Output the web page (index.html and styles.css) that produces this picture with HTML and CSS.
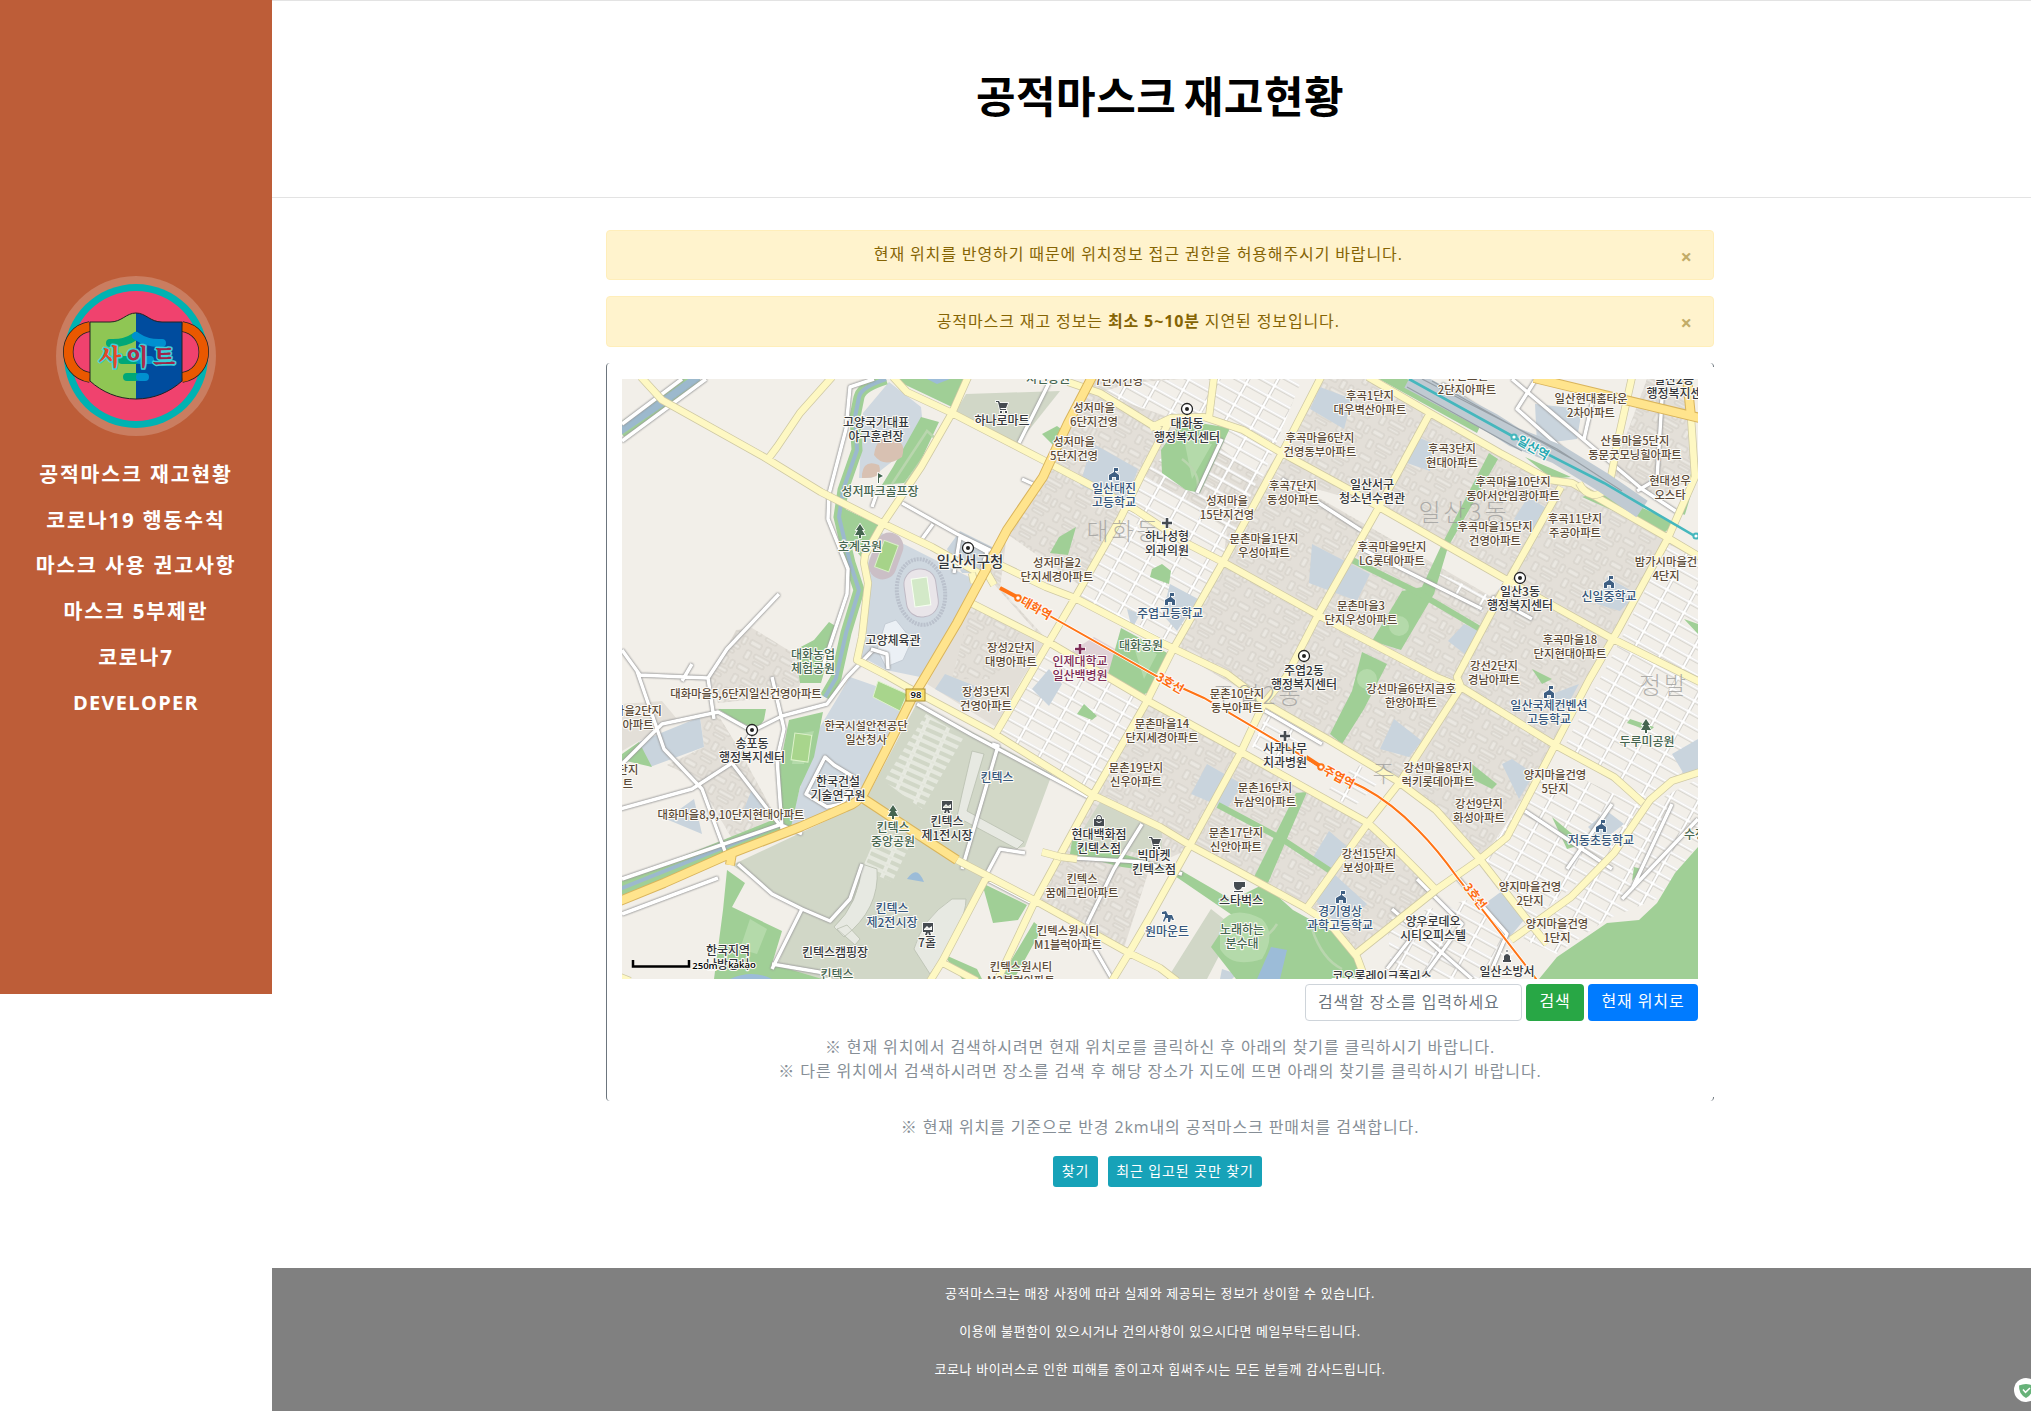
FILE: index.html
```html
<!DOCTYPE html>
<html lang="ko">
<head>
<meta charset="utf-8">
<title>공적마스크 재고현황</title>
<link rel="stylesheet" href="styles.css">
</head>
<body>
<div class="page">
<nav class="sidebar">
  <svg class="logo" viewBox="0 0 160 160" width="160" height="160">
    <circle cx="80" cy="80" r="80" fill="#ca7d60"/>
    <circle cx="80" cy="80" r="72" fill="#00b2b2"/>
    <circle cx="80" cy="80" r="65" fill="#f0426e"/>
    <g fill="none">
      <path d="M34 50.500C5 55 5 97 34 101.500M126 50.500c29 4.500 29 46.500 0 51" stroke="#222" stroke-width="10.500"/>
      <path d="M34 50.500C5 55 5 97 34 101.500M126 50.500c29 4.500 29 46.500 0 51" stroke="#ea5800" stroke-width="9"/>
    </g>
    <path d="M34 46H54C66 46 70 37 80 37V123C62 123 46 116 34 105Z" fill="#8fc654"/>
    <path d="M126 46H106C94 46 90 37 80 37V123C98 123 114 116 126 105Z" fill="#004c9e"/>
    <path d="M34 46H54C66 46 70 37 80 37S94 46 106 46H126V105C114 116 98 123 80 123S46 116 34 105Z" fill="none" stroke="#222" stroke-width="1"/>
    <path d="M54 67Q68 68 80 60M66 84H80M71 101H80" stroke="#00a878" stroke-width="8" stroke-linecap="round" fill="none"/>
    <path d="M106 67Q92 68 80 60V60M94 84H84M89 101H84" stroke="#0090d0" stroke-width="8" stroke-linecap="round" fill="none"/>
    <g class="logo-text"><text x="54" y="89" fill="#e24a26">사</text><text x="81" y="89" fill="#b02a48">이</text><text x="108" y="89" fill="#9c2448">트</text></g>
  </svg>
  <ul class="menu">
    <li>공적마스크 재고현황</li>
    <li>코로나19 행동수칙</li>
    <li>마스크 사용 권고사항</li>
    <li>마스크 5부제란</li>
    <li>코로나7</li>
    <li class="latin">DEVELOPER</li>
  </ul>
</nav>
<div class="main">
  <header class="head"><h1>공적마스크 재고현황</h1></header>
  <div class="container">
    <div class="alert"><p>현재 위치를 반영하기 때문에 위치정보 접근 권한을 허용해주시기 바랍니다.</p><span class="close">×</span></div>
    <div class="alert second"><p>공적마스크 재고 정보는 <b>최소 5~10분</b> 지연된 정보입니다.</p><span class="close">×</span></div>
    <section class="card">
      <svg class="map" viewBox="0 0 1076 600" width="1076" height="600">
        <defs>
          <pattern id="bld" width="34" height="27" patternUnits="userSpaceOnUse" patternTransform="rotate(29)">
            <path d="M2 3h12v5H2zM19 2h5v9h-5zM28 3h4v8h-4zM3 14h5v9H3zM12 14h17v4H12zM14 21h12v3H14z" fill="#eae7e1" stroke="#d0ccc4" stroke-width=".9"/>
          </pattern>
          <pattern id="grid" width="26" height="12" patternUnits="userSpaceOnUse" patternTransform="rotate(29)">
            <path d="M0 1.5h26M2 0v12" stroke="#c0bdb6" stroke-width="3.800"/>
            <path d="M0 1.5h26M2 0v12" stroke="#fff" stroke-width="2.600"/>
          </pattern>
          <pattern id="lots" width="22" height="8" patternUnits="userSpaceOnUse" patternTransform="rotate(24)">
            <path d="M1 1h20v6H1z" fill="none" stroke="#eceee6" stroke-width="1.6"/>
          </pattern>
        </defs>
        <path d="M0 0H1076V600H0Z" fill="#f2efe9"/>

        <g fill="#e3dfd8">
          <path d="M446 44L421 98L362 194L428 268L374 354L471 416L412 524L375 600H492L540 500L682 528L735 578L814 511L903 545L949 518L1021 424L1076 300V176L1046 159L808 34L746 0H469Z"/>
          <path d="M114 251L130 249L171 274L180 300L174 316L96 324L88 300Z"/>
          <path d="M78 336L96 336L114 365L155 440L115 468L75 400L45 386L82 368Z"/>
          <path d="M0 325L40 322L55 340L0 372ZM349 226L424 262L400 300L374 348L305 305ZM1025 0H1065L1073 98L1035 120L990 95Z"/>
        </g>
        <path fill="url(#bld)" d="M446 44L421 98L362 194L428 268L374 354L471 416L412 524L375 600H492L540 500L682 528L735 578L814 511L903 545L949 518L1021 424L1076 300V176L1046 159L808 34L746 0H469ZM114 251L130 249L171 274L180 300L174 316L96 324L88 300ZM78 336L96 336L114 365L155 440L115 468L75 400L45 386L82 368ZM349 226L400 250L374 300L330 300ZM1025 0H1065L1073 98L1035 120L990 95Z"/>

        <g fill="#f2efe9">
          <path d="M507 4L560 0H699L640 100L587 60L549 39L478 14ZM520 95L605 150L601 183L549 274L453 219L499 138Z"/>
          <path d="M428 268L524 324L471 416L374 354ZM1046 165L1076 180V420L1021 428L985 540L900 545L862 478L933 370Z"/>
          <path d="M385 155L378 209L428 264L524 320L619 373L746 444L814 511L903 545L814 431L646 326L538 263Z"/>
          <path d="M735 578L814 511L860 500L935 578V600H742ZM814 0H1010L995 61L985 100L900 50ZM660 100L757 128L885 201L870 218L650 92ZM404 470L440 478L412 524L364 496ZM412 524L507 574L492 600H375ZM528 488L567 470L682 530L735 578L600 570L560 600H492Z"/>
        </g>
        <path fill="url(#grid)" d="M507 4L560 0H680L640 100L587 60L549 39L478 14ZM575 50L640 90L601 183L499 138L520 95ZM499 141L600 185L549 274L453 219ZM428 270L524 324L471 416L374 354ZM1046 165L1076 180V390L1021 420L940 372L1000 258ZM928 385L1021 428L985 480L905 545L862 478ZM1028 425L1076 400V465L1035 520L985 540L935 575L900 560L949 520L992 474ZM740 160L870 218L860 234L730 150ZM645 335L690 360L665 385L630 368ZM735 385L760 400L730 430L705 412ZM765 540L850 520L880 560L860 600H770Z"/>

        <g fill="#d1d7c7">
          <path d="M295 324L430 395L403 468L378 472L364 496L310 600H150L178 530L110 486L242 424Z"/>
          <path d="M344 15L438 12L395 66L334 32Z"/><path d="M480 420L540 450V480L455 460ZM589 530L612 548L585 600H545Z"/>
        </g>
        <path fill="url(#lots)" d="M304 335L342 358L300 430L262 402ZM255 455L290 462L270 503L240 490Z"/>
        <g fill="#e7e9e2" stroke="#b9bfb0" stroke-width=".8">
          <path d="M350 372L362 375L345 432L402 463L395 470L335 438L340 415ZM240 485L255 490Q258 530 222 558L212 548Q237 525 240 485ZM330 520L344 520Q344 545 308 595L292 570Q300 540 330 520ZM225 546L238 560L233 566L215 550Z"/>
        </g>

        <g fill="#c9d4dd">
          <path d="M267 3L299 28L300 38L285 71L249 99L237 99L241 34ZM258 153L353 201L303 299L264 291L240 278L246 184ZM228 298L285 318L242 414L178 448L167 449L192 358Z" fill="#cfd8e0"/>
          <path d="M17 363L78 338L82 368L28 388ZM325 170L338 152L374 170L360 194L340 194ZM470 64L516 90L502 128L458 106ZM688 30L698 8L730 20L722 50ZM785 84L796 58L812 65L808 92ZM548 205L576 220L555 252L540 235ZM690 165L748 195L735 222L687 204ZM892 140L906 118L926 130L912 154ZM985 198L1015 215L998 232L975 225ZM826 262L842 245L857 252L844 276ZM323 295L358 309L346 328L313 310ZM913 25L960 30L955 60L915 65ZM569 415L585 385L620 405L605 430ZM758 370L772 340L800 362L787 378ZM880 385L890 380L912 395L897 420ZM690 480L707 452L728 470L715 495ZM692 520L712 495L745 525L720 550ZM861 526L880 512L902 541L887 559ZM930 315L957 305L942 332L915 325ZM966 448L985 432L1002 445L980 462ZM1050 375L1076 360V396L1063 397ZM410 310L427 290L440 305L427 327ZM505 230L518 235L510 250Z"/>
          <path d="M44 440L72 420L80 455ZM120 435L130 410L155 440ZM600 590L615 595L610 600H598Z"/>
        </g>
        <path d="M450 272L472 258L502 275L490 300L462 298Z" fill="#e0d2d6"/>

        <g fill="#a0cf96">
          <path d="M271 0L330 28L344 0ZM299 38L317 43L299 81L282 104L260 106L271 88ZM221 129L257 146L239 178L224 158ZM207 243L215 248L199 304L178 304L173 271L192 261Z"/>
          <path d="M96 330L144 330L142 341L135 351L114 341ZM17 363L30 388L0 381V375ZM167 341L201 333L192 378L178 408L169 448L158 444L157 391Z"/>
          <path d="M105 491L123 504L110 528L160 552L150 585L200 600H92L101 531ZM360 504L405 526L396 541L371 544ZM412 543L420 550L392 600H378ZM321 575L355 590L360 600H340Z"/>
          <path d="M450 461L522 481L560 492L610 521L642 505L671 531L689 541L717 554L735 581L739 600H614L589 568L610 536L550 495L500 488L448 475ZM1076 468L1053 494L1035 524L1017 541L985 544L935 578L917 600H1076Z"/>
          <path d="M757 0H785L864 34L855 54ZM903 78L949 98L930 100ZM982 111L1053 144L1042 154L960 118ZM560 41L608 49L578 114L564 111L540 94L539 71ZM530 190L540 185L549 192L547 205L528 198ZM499 249L549 276L535 310L515 318L485 299Z"/>
          <path d="M867 74L876 80L826 168L812 215L779 271L750 262L780 212L800 208L820 165ZM740 273L765 285L742 330L720 365L708 355L730 312ZM685 413L674 414L632 498L646 504ZM437 158L454 148L446 176L428 174ZM420 55L435 47L446 55L435 70ZM455 335L462 325L475 337L470 341ZM850 385L875 405L870 410L850 400ZM930 438L962 465L945 470ZM1008 340L1032 348L1028 352L1005 344ZM1012 488L1020 490L1010 502ZM910 290L930 300L920 305ZM1062 240L1076 245V255Z"/>
        </g>
        <path d="M728 180L795 213L858 250M596 426L660 460L710 493M1075 85L1060 135" fill="none" stroke="#a0cf96" stroke-width="6"/>
        <g fill="#b4daaa"><circle cx="777" cy="247" r="10"/><circle cx="745" cy="300" r="10"/><path d="M598 545Q610 525 640 540Q655 555 640 580Q610 590 598 570ZM175 355L192 352L182 385L170 385ZM562 60L590 65L570 100ZM510 262L535 275L522 300ZM128 540L145 550L135 575L118 570Z"/></g>
        <path d="M649 568L665 571L658 600H635ZM305 0H328L315 5ZM285 500Q295 485 302 503ZM108 600Q130 590 150 600Z" fill="#9cbcd8"/>

        <path d="M252 76Q255 55 270 60Q285 62 280 78Q262 90 252 76ZM240 95Q242 80 257 86Q262 100 240 99Z" fill="#d8c1b2"/>
        <g transform="rotate(20 264 177)"><rect x="250" y="153" width="28" height="48" rx="14" fill="#cbbfc6"/><rect x="257" y="163" width="15" height="28" fill="#a6d389" stroke="#d9f0c8"/></g>
        <g transform="rotate(-8 299 213)"><ellipse cx="299" cy="213" rx="24" ry="33" fill="none" stroke="#bac1cc" stroke-width="4" stroke-dasharray="2 1"/><rect x="283" y="190" width="32" height="48" rx="15" fill="#e9e5e9" stroke="#bfb9c4"/><rect x="291" y="199" width="16" height="28" fill="#d3e9c8" stroke="#f6fff0"/></g>
        <path d="M274 241L290 261L281 281L264 288L255 271L263 245Z" fill="#ebf0f5" stroke="#c5cdd6"/>
        <path d="M256 302L285 315L278 332L251 318Z" fill="#a8d58c" stroke="#def2cb"/>
        <rect x="171" y="355" width="17" height="27" fill="#a8d58c" stroke="#def2cb" transform="rotate(8 179 368)"/>

        <g fill="none" stroke="#b9d6ae" stroke-width="2.500"><path d="M270 105L305 52L314 60L283 105M560 80Q580 95 575 112M655 545Q640 570 600 565M690 550Q700 580 720 590"/></g>

        <g fill="none">
          <path d="M264 0Q239 8 237 18L233 38L235 71L221 111L217 138L228 184L237 211L224 254L214 299L203 318" stroke="#a0cf96" stroke-width="11"/>
          <path d="M264 0Q239 8 237 18L233 38L235 71L221 111L217 138L228 184L237 211L224 254L214 299L203 318" stroke="#9cb9cd" stroke-width="4"/>
          <path d="M76 -2L42 22L-2 52M157 446L85 475L-2 510" stroke="#a0cf96" stroke-width="14"/>
          <path d="M76 -2L42 22L-2 52" stroke="#9cb9cd" stroke-width="8"/><path d="M157 446L85 475L-2 510" stroke="#9cb9cd" stroke-width="4"/>
        </g>

        <g class="minor" fill="none">
            <path d="M60 0L0 45M84 0L0 62M252 0L228 8L224 50L207 115L206 140L226 190L225 215L200 290M0 271L18 296L86 299L105 270L157 215M86 299L92 340M60 302L70 285M-5 390L40 345L96 333L130 352L160 337L205 325L225 298L252 270M-2 430L70 410L110 384L130 353M15 292L42 370L80 410L104 475M110 384L157 445L180 455M160 445L0 500M96 499L0 535M116 485L150 515L180 530L150 590M150 585L220 597M150 298L162 350L155 380L160 450M180 530L208 542L228 520L240 485"/>
            <path d="M280 124L335 155L374 174M311 145L300 160M256 111L250 128M332 194L338 158L365 173L360 190M428 2L397 64M400 100L413 106M295 325L350 356L470 420M370 365L376 367L340 490M403 474L378 470L362 500M364 500L412 525M453 479L520 483L560 495M520 445L492 490L465 545M460 548L490 600M203 378L184 415L205 428L220 425L235 400L212 386ZM249 270L265 275L266 290"/>
            <path d="M660 100L740 152M740 170L860 230M870 218L910 240M890 0L1020 110L1058 135M914 0L895 30L985 110M1040 20L1035 100L1015 112M962 60L970 25M820 5L895 55M575 114L600 60M795 500L840 545L800 600M770 530L850 600M800 545L765 590M835 498L885 555L870 590M640 330L700 365M900 430L990 490M990 425L945 490M1050 425L1010 510M1076 440L1000 520"/>
        </g>
        <g id="majors"></g>
        <g fill="none">
          <path d="M787 0L870 44L892 58L935 75L982 104L1020 130" stroke="#c0cad2" stroke-width="20"/>
          <path d="M800 0L935 70L1000 112M785 8L900 72M810 2L950 80" stroke="#969fa6" stroke-width="1.2"/>
          <path d="M787 0L892 58L982 104L1076 159" stroke="#45b7bd" stroke-width="2.600"/>
          <circle cx="892" cy="58" r="2.600" fill="#fff" stroke="#45b7bd" stroke-width="2"/><circle cx="1074" cy="157" r="2.600" fill="#fff" stroke="#45b7bd" stroke-width="2"/>
          <path d="M378 209L396 219L538 299L582 319L699 388L742 409Q770 424 796 451Q815 470 835 498L918 605" stroke="#fff" stroke-width="3.5"/>
          <path d="M378 209L396 219L538 299L582 319L699 388L742 409Q770 424 796 451Q815 470 835 498L918 605" stroke="#ff7416" stroke-width="2"/>
          <path d="M378 209L395 218M684 378L698 387" stroke="#ff7416" stroke-width="4"/>
          <circle cx="396" cy="219" r="2.800" fill="#fff" stroke="#ff7416" stroke-width="2"/><circle cx="699" cy="388" r="2.800" fill="#fff" stroke="#ff7416" stroke-width="2"/>
        </g>
        <rect x="284" y="310" width="19" height="12" fill="#f8dc6a" stroke="#a98d2f"/>
        <g id="labels"></g>
        <path d="M11 581V587.500H67V581" fill="none" stroke="#000" stroke-width="2.500"/>
      </svg>
      <div class="search">
        <span class="input">검색할 장소를 입력하세요</span><span class="btn green">검색</span><span class="btn blue">현재 위치로</span>
      </div>
      <p class="note">※ 현재 위치에서 검색하시려면 현재 위치로를 클릭하신 후 아래의 찾기를 클릭하시기 바랍니다.</p>
      <p class="note">※ 다른 위치에서 검색하시려면 장소를 검색 후 해당 장소가 지도에 뜨면 아래의 찾기를 클릭하시기 바랍니다.</p>
    </section>
    <p class="note range">※ 현재 위치를 기준으로 반경 2km내의 공적마스크 판매처를 검색합니다.</p>
    <div class="find"><span class="btn sm">찾기</span><span class="btn sm wide">최근 입고된 곳만 찾기</span></div>
  </div>
  <footer class="foot">
    <p>공적마스크는 매장 사정에 따라 실제와 제공되는 정보가 상이할 수 있습니다.</p>
    <p>이용에 불편함이 있으시거나 건의사항이 있으시다면 메일부탁드립니다.</p>
    <p>코로나 바이러스로 인한 피해를 줄이고자 힘써주시는 모든 분들께 감사드립니다.</p>
  </footer>
</div>
</div>
<svg class="guard" viewBox="0 0 24 24" width="24" height="24"><circle cx="12" cy="12" r="12" fill="#fff"/><path d="M5 7.500Q12 4.500 19 7.500Q19.500 16 12 20Q4.500 16 5 7.500Z" fill="#67b279"/><path d="M9 11.500l2.500 2.800L16 10" fill="none" stroke="#fff" stroke-width="1.500"/></svg>
<script src="map.js"></script>
</body>
</html>
```
FILE: styles.css
```css
* { box-sizing: border-box; }
html, body { margin: 0; height: 1411px; overflow: hidden; }
body { font-family: "Open Sans", "Noto Sans CJK KR", sans-serif; font-size: 16px; line-height: 24px; letter-spacing: .88px; color: #868e96; background: #fff; }
p, h1, ul { margin: 0; padding: 0; }
.page { display: flex; align-items: flex-start; width: 2048px; }
.sidebar { width: 272px; height: 994px; flex: none; background: #bd5d38; display: flex; flex-direction: column; align-items: center; padding-top: 276px; }
.logo { display: block; }
.logo-text { font: 900 23px "Noto Serif CJK KR", "Noto Sans CJK KR", sans-serif; letter-spacing: 0; text-anchor: middle; stroke: #3cd0d8; stroke-width: 3px; paint-order: stroke; }
.menu { list-style: none; margin-top: 16px; text-align: center; color: #fff; font-weight: 700; font-size: 20.5px; letter-spacing: 1.85px; white-space: nowrap; }
.menu li { height: 45.7px; line-height: 45.7px; }
.menu .latin { font-size: 20px; letter-spacing: 1.3px; }
.main { width: 1776px; height: 1411px; flex: none; display: flex; flex-direction: column; border-top: 1px solid #e3e3e3; }
.head { height: 197px; border-bottom: 1px solid #e3e3e3; text-align: center; padding-top: 61px; }
h1 { font: 700 43px/64px "Noto Sans CJK KR", sans-serif; letter-spacing: .5px; word-spacing: -5px; color: #000; white-space: nowrap; }
.container { width: 1108px; margin: 0 auto; padding-top: 32px; flex: 1; white-space: nowrap; }
.alert { height: 50px; margin-bottom: 16px; border: 1px solid #ffeeba; border-radius: 4px; background: #fff3cd; color: #856404; display: flex; align-items: center; padding-right: 21px; }
.alert.second { height: 51px; }
.alert p { flex: 1; text-align: center; padding-right: 11px; padding-bottom: 2px; }
.alert b { font-weight: 700; }
.close { font: 700 20px/20px "Open Sans", sans-serif; letter-spacing: 0; color: #c2ac68; padding-top: 3px; }
.card { position: relative; height: 738px; border-left: 1px solid #6c757d; border-radius: 4px; padding: 16px 16px 0 15px; }
.card::before, .card::after { content: ""; position: absolute; right: 0; width: 4px; height: 4px; border-right: 1px solid #6c757d; }
.card::before { top: 0; border-radius: 0 4px 0 0; }
.card::after { bottom: 0; border-radius: 0 0 4px 0; }
.map { display: block; }
.search { display: flex; justify-content: flex-end; gap: 4px; height: 37px; margin-top: 5px; margin-bottom: 14px; }
.input { width: 217px; border: 1px solid #ced4da; border-radius: 4px; padding-left: 12px; line-height: 34px; color: #6c757d; }
.btn { border-radius: 4px; color: #fff; text-align: center; line-height: 35px; }
.green { width: 58px; background: #28a745; }
.blue { width: 110px; background: #007bff; }
.note { text-align: center; }
.range { margin-top: 14px; }
.find { display: flex; justify-content: center; gap: 10px; margin-top: 17px; padding-right: 5px; }
.sm { width: 45px; height: 31px; line-height: 29px; font-size: 14px; background: #17a2b8; border-radius: 3px; }
.wide { width: 154px; }
.foot { height: 143px; background: #808080; color: #fff; text-align: center; font-size: 13px; letter-spacing: .62px; padding-top: 6px; }
.foot p { height: 38px; line-height: 38px; }
.guard { position: absolute; left: 2014px; top: 1378px; }

.minor path { stroke: #fff; stroke-width: 3.5px; stroke-linejoin: round; filter: drop-shadow(0 0 1px #999) drop-shadow(0 0 .4px #999); }
.road path { fill: none; stroke: #cfc9a4; stroke-width: 8px; stroke-linejoin: round; }
.road .in { stroke: #fef8c3; stroke-width: 6.5px; }
.road.big path { stroke: #d9b45c; stroke-width: 10px; }
.road.big .in { stroke: #ffe48d; stroke-width: 8px; }
.lb { font: 500 11.3px "Noto Sans CJK KR", sans-serif; letter-spacing: 0; text-anchor: middle; fill: #5b4a38; stroke: #fbfaf6; stroke-width: 2.2px; paint-order: stroke; stroke-linejoin: round; }
.lb.k { fill: #33363b; font-size: 12px; }
.lb.g { fill: #456550; font-size: 12px; }
.lb.b { fill: #35567c; font-size: 12px; }
.lb.m { fill: #7d2b55; font-size: 12px; }
.lb.L { fill: #33363b; font-size: 14.5px; }
.lb.d { fill: #9a9a98; fill-opacity: .75; stroke: none; font-size: 24px; font-weight: 300; letter-spacing: 3px; }
.lb.o { fill: #ff6a10; font-size: 12px; font-weight: 700; }
.lb.t { fill: #28a9b4; font-size: 12.5px; font-weight: 700; }
.lb.s { fill: #000; font: 600 9.5px "Open Sans", sans-serif; }
.ic { fill: #454b50; stroke: #fff; stroke-width: 1.5px; paint-order: stroke; }
.ic.b { fill: #3e5f83; }
.ic.g { fill: #456550; }
.ic.m { fill: #7d2b55; }
```
FILE: map.js
```js
const NS = "http://www.w3.org/2000/svg";
const make = (tag, attrs, parent) => {
  const el = document.createElementNS(NS, tag);
  for (const k in attrs) el.setAttribute(k, attrs[k]);
  parent.appendChild(el);
  return el;
};

// Arterial roads: a casing below, a fill above.
const yellow = "M19 -2L40 21L142 78L199 113L260 144L310 168L362 197M374 184L424 208L453 219L538 263L605 295L646 326L707 361L774 401L814 431L857 479L903 538L925 565M210 -2L178 34L155 68L146 80M271 -2L285 13L330 34L421 81L478 111L514 131L564 164L601 183L696 236L757 268L814 298L839 308L933 366L992 398L1021 424M346 -2L330 34L299 88L260 146L243 176L242 184L246 204L240 258L235 281L264 296L285 308L371 354L471 416L538 448L571 468L614 491L682 528L707 544L735 578L744 602M446 3L478 14L538 51M592 -2L587 38M699 -2L660 74L601 183L549 274L524 324L471 416L412 524L375 602M528 49L549 39L582 38L621 51L660 74L728 111L757 128L885 201L989 259L1078 303M549 39L520 95L499 138L453 219L424 268L374 354M808 34L757 128L696 236L664 298L642 324L619 373L567 468L528 538L507 574L490 602M746 -2L808 34L878 74L928 101L950 104L1046 159L1078 178M939 108L885 204L835 298L839 308L778 403L746 444L685 529M1069 38L1073 98L1046 159L996 251L967 301L933 366L885 458L857 481L814 511L735 574M1078 393L1050 402L1028 421L992 474L949 518L889 561M349 224L428 264L528 323L619 373L746 444Q780 475 814 511M335 481L412 521L507 574L538 589L555 602M364 499L321 581L308 602M321 584L355 602M-2 598L8 602";
const amber = "M470 -2L446 44L421 98L385 151L362 194L335 244L303 298L289 321L264 371L242 414Q236 424 224 428L178 448L110 474L42 504L-2 522M912 -1L1078 39M1065 -2L1069 38M242 420L289 451L335 481M110 474L108 486";
const ramp = "M1010 -2L996 61L989 98Q985 116 971 116Q962 114 957 104M350 194L352 204M365 194L372 206M439 478L420 473M439 478L455 480";
const majors = document.getElementById("majors");
for (const [cls, d] of [["road", yellow], ["road", ramp], ["road big", amber]]) {
  const g = make("g", { class: cls }, majors);
  make("path", { d }, g);
  make("path", { d, class: "in" }, g);
}

// kind, x, y of the first line's middle, lines, rotation
const labels = [
  ["d", 502, 152, "대화동"], ["d", 842, 133, "일산3동"], ["d", 636, 316, "주엽2동"], ["d", 1042, 306, "정발"], ["d", 763, 394, "주"],
  ["k", 254, 44, "고양국가대표|야구훈련장"], ["g", 258, 113, "성저파크골프장"], ["k", 380, 42, "하나로마트"],
  ["", 472, 29, "성저마을|6단지건영"], ["", 452, 63, "성저마을|5단지건영"], ["g", 426, 0, "시민공원"], ["", 497, 2, "7단지건영"],
  ["b", 492, 110, "일산대진|고등학교"], ["g", 238, 168, "호계공원"], ["L", 348, 183, "일산서구청"],
  ["", 435, 184, "성저마을2|단지세경아파트"], ["o", 414, 229, "대화역", 30], ["k", 271, 262, "고양체육관"],
  ["g", 191, 276, "대화농업|체험공원"], ["", 389, 269, "장성2단지|대명아파트"], ["m", 458, 283, "인제대학교|일산백병원"],
  ["g", 519, 267, "대화공원"], ["b", 548, 235, "주엽고등학교"], ["k", 545, 158, "하나성형|외과의원"],
  ["k", 565, 45, "대화동|행정복지센터"], ["", 748, 17, "후곡1단지|대우벽산아파트"], ["", 698, 59, "후곡마을6단지|건영동부아파트"],
  ["", 671, 107, "후곡7단지|동성아파트"], ["", 830, 70, "후곡3단지|현대아파트"], ["k", 750, 106, "일산서구|청소년수련관"],
  ["", 891, 103, "후곡마을10단지|동아서안임광아파트"], ["", 605, 122, "성저마을|15단지건영"], ["", 642, 160, "문촌마을1단지|우성아파트"],
  ["", 770, 168, "후곡마을9단지|LG롯데아파트"], ["", 873, 148, "후곡마을15단지|건영아파트"], ["", 953, 140, "후곡11단지|주공아파트"],
  ["k", 898, 213, "일산3동|행정복지센터"], ["b", 987, 218, "신일중학교"], ["", 1044, 183, "밤가시마을건|4단지"],
  ["", 739, 227, "문촌마을3|단지우성아파트"], ["k", 682, 292, "주엽2동|행정복지센터"], ["", 872, 287, "강선2단지|경남아파트"],
  ["", 948, 261, "후곡마을18|단지현대아파트"], ["", 845, -3, "유진스웰|2단지아파트"], ["", 969, 20, "일산현대홈타운|2차아파트"],
  ["", 1013, 62, "산들마을5단지|동문굿모닝힐아파트"], ["k", 1052, 1, "일산2동|행정복지센"], ["", 1048, 102, "현대성우|오스타"],
  ["t", 911, 69, "일산역", 30],
  ["", 124, 315, "대화마을5,6단지일신건영아파트"], ["", 16, 332, "마을2단지|아파트"], ["k", 130, 365, "송포동|행정복지센터"],
  ["", 244, 347, "한국시설안전공단|일산청사"], ["k", 216, 403, "한국건설|기술연구원"], ["", 109, 436, "대화마을8,9,10단지현대아파트"],
  ["s", 294, 316, "98"], ["", 364, 313, "장성3단지|건영아파트"], ["b", 375, 399, "킨텍스"], ["", 540, 345, "문촌마을14|단지세경아파트"],
  ["", 514, 389, "문촌19단지|신우아파트"], ["g", 271, 449, "킨텍스|중앙공원"], ["k", 325, 443, "킨텍스|제1전시장"],
  ["k", 477, 456, "현대백화점|킨텍스점"], ["k", 532, 477, "빅마켓|킨텍스점"], ["", 460, 500, "킨텍스|꿈에그린아파트"],
  ["b", 270, 530, "킨텍스|제2전시장"], ["k", 305, 564, "7홀"], ["", 446, 552, "킨텍스원시티|M1블럭아파트"], ["", 399, 588, "킨텍스원시티|M2블럭아파트"],
  ["k", 213, 574, "킨텍스캠핑장"], ["k", 106, 572, "한국지역|난방공사"], ["s", 83, 587, "250m"], ["s", 120, 586, "kakao"],
  ["g", 215, 596, "킨텍스"], ["", 6, 391, "단지|트"],
  ["", 615, 315, "문촌10단지|동부아파트"], ["o", 548, 304, "3호선", 30], ["", 789, 310, "강선마을6단지금호|한양아파트"],
  ["k", 663, 370, "사과나무|치과병원"], ["b", 927, 327, "일산국제컨벤션|고등학교"], ["g", 1025, 363, "두루미공원"],
  ["o", 717, 398, "주엽역", 28], ["", 816, 389, "강선마을8단지|럭키롯데아파트"], ["", 933, 396, "양지마을건영|5단지"],
  ["", 857, 425, "강선9단지|화성아파트"], ["", 643, 409, "문촌16단지|뉴삼익아파트"], ["", 614, 454, "문촌17단지|신안아파트"],
  ["", 747, 475, "강선15단지|보성아파트"], ["b", 979, 462, "저동초등학교"], ["k", 619, 522, "스타벅스"],
  ["b", 718, 533, "경기영상|과학고등학교"], ["b", 545, 553, "원마운트"], ["g", 620, 551, "노래하는|분수대"],
  ["k", 811, 543, "양우로데오|시티오피스텔"], ["", 908, 508, "양지마을건영|2단지"], ["", 935, 545, "양지마을건영|1단지"],
  ["k", 885, 593, "일산소방서"], ["k", 760, 598, "코오롱레이크폴리스"], ["o", 853, 517, "3호선", 52], ["g", 1073, 456, "수정"]
];
const layer = document.getElementById("labels");
for (const [kind, x, y, text, turn] of labels) {
  const size = kind === "d" ? 8.5 : kind === "L" ? 5.3 : kind === "s" ? 3.4 : 4.3;
  const t = make("text", { class: "lb " + kind, x, y: y + size }, layer);
  if (turn) t.setAttribute("transform", `rotate(${turn} ${x} ${y})`);
  text.split("|").forEach((line, i) => {
    make("tspan", { x, dy: i ? 13.2 : 0 }, t).textContent = line;
  });
}

// Point-of-interest glyphs, centred on 0,0
const shapes = {
  school: "M-5 5V0L0 -3V-7H4V-4H1V-3L5 0V5H2V2H-2V5Z",
  tree: "M0 -7L4 -1H2L5 4H1V7H-1V4H-5L-2 -1H-4Z",
  cart: "M-6 -5H-3L-2 -3H6L4 2H-2L-1 3H4V4H-2L-4 -4H-6ZM-2 5H0V7H-2ZM3 5H5V7H3Z",
  cross: "M-1.3 -5H1.3V-1.3H5V1.3H1.3V5H-1.3V1.3H-5V-1.3H-1.3Z",
  flag: "M-2 -5L3 -2L-1 0V5H-2Z",
  bag: "M-5 -2H-3Q-3 -6 0 -6T3 -2H5V5H-5ZM-2 -2H2Q2 -5 0 -5T-2 -2ZM-3 0Q0 4 3 0L2 0Q0 2 -2 0Z",
  hall: "M-5 -6H5V3H2L3 6H1L0 3L-1 6H-3L-2 3H-5ZM-4 1H4V-3L1 -1L-1 -3L-4 0Z",
  cup: "M-5 -5H6V0H3Q2 3 -1 3T-5 -1ZM-5 4H4V5H-5Z",
  horse: "M-6 -5L-2 -6L0 -2H4L6 3H4L3 1L2 5H0V1H-2L-4 5L-5 4L-3 -1L-3 -3L-6 -3Z",
  siren: "M-4 5V3H-3V-1Q0 -5 3 -1V3H4V5ZM-.5 -7H.5V-5H-.5ZM-6 -4L-4 -2M6 -4L4 -2Z"
};
const pois = [
  ["flag", 258, 99, "g"], ["cart", 380, 27, ""], ["school", 492, 96, "b"], ["tree", 238, 152, "g"], ["cross", 458, 270, "m"],
  ["school", 548, 221, "b"], ["cross", 545, 144, ""], ["school", 987, 204, "b"], ["tree", 271, 433, "g"], ["hall", 325, 428, ""],
  ["bag", 477, 442, ""], ["cart", 533, 463, ""], ["hall", 306, 550, ""], ["cross", 663, 357, ""], ["school", 927, 314, "b"],
  ["tree", 1024, 347, "g"], ["school", 979, 448, "b"], ["cup", 617, 508, ""], ["school", 719, 519, "b"], ["horse", 546, 538, "b"], ["siren", 885, 578, ""]
];
for (const [name, x, y, kind] of pois) {
  make("path", { class: "ic " + kind, d: shapes[name], "fill-rule": "evenodd", transform: `translate(${x} ${y})` }, layer);
}
for (const [x, y] of [[346, 169], [565, 30], [898, 199], [682, 277], [130, 351]]) {
  make("circle", { cx: x, cy: y, r: 5.5, fill: "#fff", stroke: "#222", "stroke-width": 1.3 }, layer);
  make("circle", { cx: x, cy: y, r: 2, fill: "#222" }, layer);
}
```
